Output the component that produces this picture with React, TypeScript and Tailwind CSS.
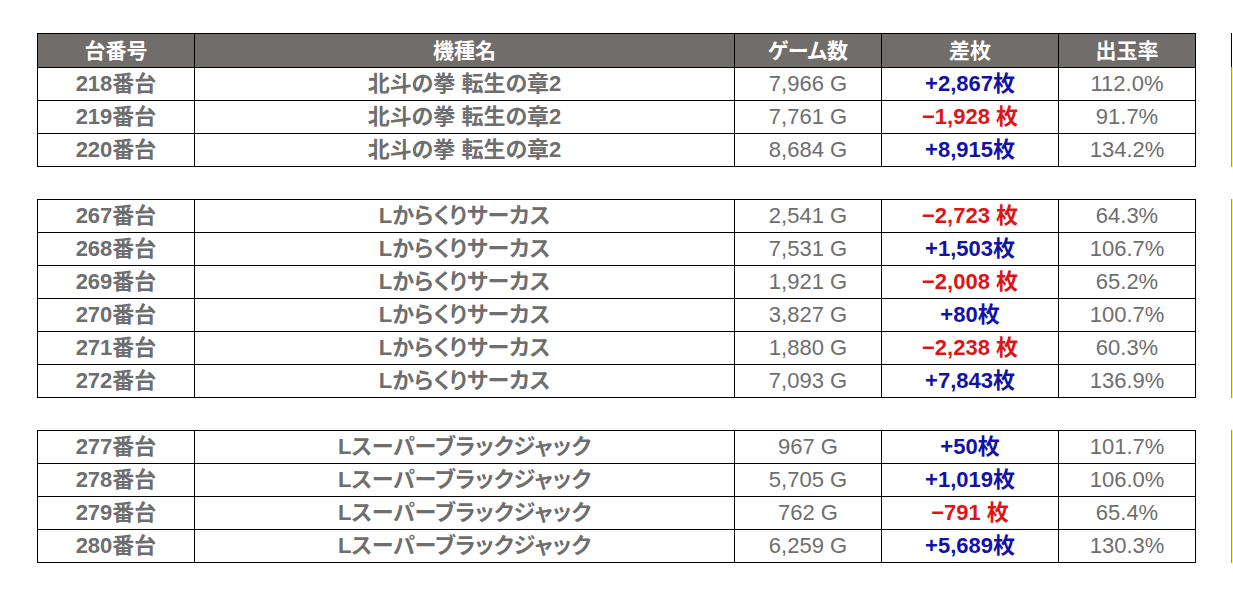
import React from "react";

type Row = { no: string; name: string; games: string; diff: string; rate: string };

const groups: Row[][] = [
  [
    { no: "218", name: "北斗の拳 転生の章2", games: "7,966 G", diff: "+2,867枚", rate: "112.0%" },
    { no: "219", name: "北斗の拳 転生の章2", games: "7,761 G", diff: "−1,928 枚", rate: "91.7%" },
    { no: "220", name: "北斗の拳 転生の章2", games: "8,684 G", diff: "+8,915枚", rate: "134.2%" },
  ],
  [
    { no: "267", name: "Lからくりサーカス", games: "2,541 G", diff: "−2,723 枚", rate: "64.3%" },
    { no: "268", name: "Lからくりサーカス", games: "7,531 G", diff: "+1,503枚", rate: "106.7%" },
    { no: "269", name: "Lからくりサーカス", games: "1,921 G", diff: "−2,008 枚", rate: "65.2%" },
    { no: "270", name: "Lからくりサーカス", games: "3,827 G", diff: "+80枚", rate: "100.7%" },
    { no: "271", name: "Lからくりサーカス", games: "1,880 G", diff: "−2,238 枚", rate: "60.3%" },
    { no: "272", name: "Lからくりサーカス", games: "7,093 G", diff: "+7,843枚", rate: "136.9%" },
  ],
  [
    { no: "277", name: "Lスーパーブラックジャック", games: "967 G", diff: "+50枚", rate: "101.7%" },
    { no: "278", name: "Lスーパーブラックジャック", games: "5,705 G", diff: "+1,019枚", rate: "106.0%" },
    { no: "279", name: "Lスーパーブラックジャック", games: "762 G", diff: "−791 枚", rate: "65.4%" },
    { no: "280", name: "Lスーパーブラックジャック", games: "6,259 G", diff: "+5,689枚", rate: "130.3%" },
  ],
];

const cols = "grid grid-cols-[157px_540px_147px_177px_137px]";
const cell = "flex items-center justify-center border-r border-b border-black";

function Table({ rows, header }: { rows: Row[]; header?: boolean }) {
  return (
    <div className="flex items-stretch">
      <div className="w-[1159px] border-l border-t border-black">
        {header && (
          <div className={`${cols} h-[34px] bg-[#716d6b] text-white font-bold text-[21px]`}>
            <div className={cell}>台番号</div>
            <div className={cell}>機種名</div>
            <div className={cell}>ゲーム数</div>
            <div className={cell}>差枚</div>
            <div className={cell}>出玉率</div>
          </div>
        )}
        {rows.map((r) => {
          const plus = r.diff.startsWith("+");
          return (
            <div key={r.no} className={`${cols} h-[33px] text-[#6e6e6e] text-[22px]`}>
              <div className={`${cell} font-bold`}>{r.no}番台</div>
              <div className={`${cell} font-bold`}>{r.name}</div>
              <div className={cell}>{r.games}</div>
              <div
                className={`${cell} font-bold ${plus ? "text-[#1212a8]" : "text-[#e01414]"}`}
              >
                {r.diff}
              </div>
              <div className={cell}>{r.rate}</div>
            </div>
          );
        })}
      </div>
      <div className="ml-[35px] w-[2px] flex flex-col">
        {header && <div className="h-[34px] border-l border-black" />}
        <div className="flex-1 border-l border-[#9a9a50] bg-[#ffff30]" />
      </div>
    </div>
  );
}

export default function App() {
  return (
    <div
      className="w-[1233px] h-[595px] bg-white pl-[37px] pt-[33px] flex flex-col gap-[32px] leading-none [font-feature-settings:'palt'] overflow-hidden"
      style={{ fontFamily: '"Liberation Sans", "Noto Sans CJK JP", sans-serif' }}
    >
      <Table rows={groups[0]} header />
      <Table rows={groups[1]} />
      <Table rows={groups[2]} />
    </div>
  );
}
